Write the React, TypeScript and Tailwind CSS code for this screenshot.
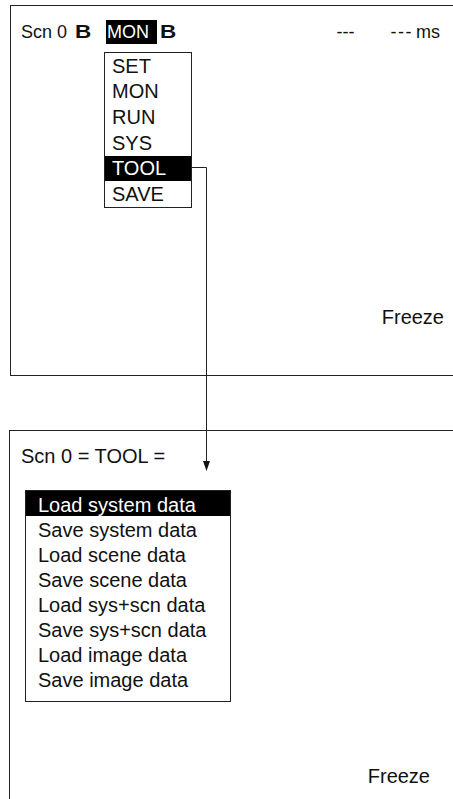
import React from "react";

const topMenu = ["SET", "MON", "RUN", "SYS", "TOOL", "SAVE"];
const toolMenu = [
  "Load system data",
  "Save system data",
  "Load scene data",
  "Save scene data",
  "Load sys+scn data",
  "Save sys+scn data",
  "Load image data",
  "Save image data",
];

export default function App() {
  return (
    <div className="relative w-[453px] h-[799px] bg-white overflow-hidden text-[#111] font-['Liberation_Sans',Arial,sans-serif]">
      {/* Top panel */}
      <div className="ml-[10px] mt-[5px] h-[371px] border-l border-t border-b border-[#222] flex flex-col">
        <div className="flex items-baseline pt-[14px] pl-[10px] pr-[13px] text-[18px] leading-[24px]">
          <span>Scn 0</span>
          <span className="ml-[8px] inline-block w-[20px] font-bold scale-x-125 origin-left">B</span>
          <span className="ml-[11px] bg-black text-white pl-[1px] pr-[8px]">MON</span>
          <span className="ml-[3px] inline-block w-[18px] font-bold scale-x-125 origin-left">B</span>
          <span className="ml-auto">---</span>
          <span className="ml-[36px] tracking-[1.5px]">---</span>
          <span className="ml-[3px]">ms</span>
        </div>
        <div className="mt-[261px] self-end pr-[9px] text-[20px] leading-[24px]">Freeze</div>
      </div>

      {/* Bottom panel */}
      <div className="ml-[9px] mt-[54px] h-[369px] border-l border-t border-[#222] flex flex-col">
        <div className="pt-[13px] pl-[11px] text-[20px] leading-[24px]">Scn 0 = TOOL =</div>
        <div className="mt-[22px] ml-[15px] w-[206px] border border-[#222] pb-[10px] text-[20px]">
          {toolMenu.map((t, i) => (
            <div
              key={t}
              className={
                i === 0
                  ? "h-[25px] pt-[3px] leading-[22px] pl-[12px] bg-black text-white"
                  : "h-[25px] pt-[3px] leading-[22px] pl-[12px]"
              }
            >
              {t}
            </div>
          ))}
        </div>
        <div className="mt-[62px] self-end pr-[23px] text-[20px] leading-[24px]">Freeze</div>
      </div>

      {/* Dropdown menu overlay */}
      <div className="absolute left-[104px] top-[52px] w-[88px] h-[156px] border border-[#222] bg-white text-[20px] leading-[24px] flex flex-col">
        {topMenu.map((t) => (
          <div
            key={t}
            className={
              t === "TOOL"
                ? "h-[25.67px] flex items-center pl-[7px] bg-black text-white"
                : "h-[25.67px] flex items-center pl-[7px]"
            }
          >
            {t}
          </div>
        ))}
      </div>

      {/* Connector arrow */}
      <svg className="absolute left-0 top-0 pointer-events-none" width="453" height="799" viewBox="0 0 453 799">
        <path d="M191 167.5 H206.5 V462" fill="none" stroke="#222" strokeWidth="1" />
        <polygon points="203,461 210,461 206.5,471" fill="#111" />
      </svg>
    </div>
  );
}
